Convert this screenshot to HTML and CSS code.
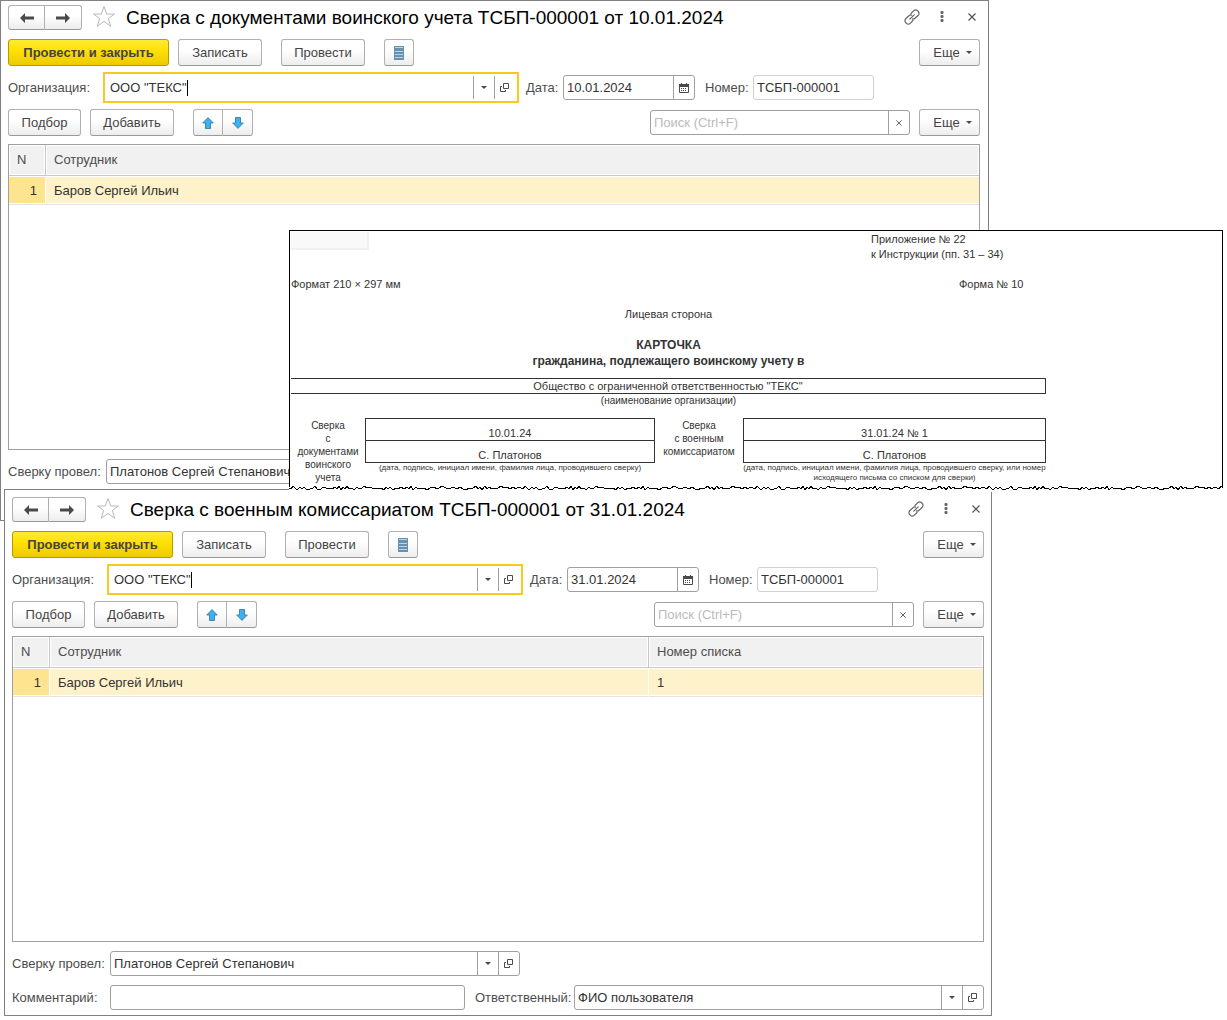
FILE: index.html
```html
<!DOCTYPE html>
<html lang="ru">
<head>
<meta charset="utf-8">
<title>Сверка с документами воинского учета</title>
<link rel="stylesheet" href="styles.css">
</head>
<body>
<svg class="defs" width="0" height="0" aria-hidden="true">
  <symbol id="i-left" viewBox="0 0 14 10"><path d="M0 5 5 0V3.500H14V6.500H5V10Z" fill="#4a4a4a"/></symbol>
  <symbol id="i-right" viewBox="0 0 14 10"><path d="M14 5 9 0V3.500H0V6.500H9V10Z" fill="#4a4a4a"/></symbol>
  <symbol id="i-star" viewBox="0 0 24 23"><path d="M12 1.500 14.700 9H22.500L16.300 13.500 18.800 21.300 12 16.500 5.200 21.300 7.700 13.500 1.500 9H9.300Z" fill="#fff" stroke="#b4bac0" stroke-width="1"/></symbol>
  <symbol id="i-link" viewBox="0 0 16 16"><g fill="none" stroke="#666" stroke-width="1.200" stroke-linecap="round"><path d="M7 4.500 9.800 1.700a2.600 2.600 0 0 1 3.700 0l.8.8a2.600 2.600 0 0 1 0 3.700L11 9.300a2.600 2.600 0 0 1-2.600.6"/><path d="M9 11.500 6.200 14.300a2.600 2.600 0 0 1-3.700 0l-.8-.8a2.600 2.600 0 0 1 0-3.700L5 6.700a2.600 2.600 0 0 1 2.600-.6"/><path d="M5.800 10.200 10.200 5.800"/></g></symbol>
  <symbol id="i-dots" viewBox="0 0 4 12"><g fill="#666"><rect x=".5" y="0" width="3" height="3" rx="1"/><rect x=".5" y="4" width="3" height="3" rx="1"/><rect x=".5" y="8" width="3" height="3" rx="1"/></g></symbol>
  <symbol id="i-close" viewBox="0 0 8 8"><path d="M.5.5l7 7M7.500.5l-7 7" stroke="#555" stroke-width="1.200"/></symbol>
  <symbol id="i-list" viewBox="0 0 10 14"><rect width="10" height="14" fill="#6991ad"/><path d="M1 1.500h8M1 5.500h8M1 8.500h8M1 11.500h8" stroke="#b9d5e8" stroke-width="1"/></symbol>
  <symbol id="i-down" viewBox="0 0 6 3"><path d="M0 0H6L3 3Z" fill="#4a4a4a"/></symbol>
  <symbol id="i-open" viewBox="0 0 10 9"><g fill="none" stroke="#4a4a4a"><path d="M3.500.5h5v5h-5z"/><path d="M2 3.500H.5v5h5V7"/></g></symbol>
  <symbol id="i-cal" viewBox="0 0 10 10"><path d="M.5 1.500h9v8h-9z" fill="#fff" stroke="#4a4a4a"/><path d="M0 1h10v3H0zM2 0h1v1H2zM7 0h1v1H7z" fill="#4a4a4a"/><path d="M2 5.500h6M2 7.500h6" stroke="#4a4a4a" stroke-dasharray="1 1"/></symbol>
  <symbol id="i-up-blue" viewBox="0 0 12 12"><path d="M6 .6 11.300 6H8.500v5.500h-5V6H.7Z" fill="#42b0ee" stroke="#2f80ad" stroke-width=".9"/></symbol>
  <symbol id="i-down-blue" viewBox="0 0 12 12"><path d="M6 11.400 11.300 6H8.500V.5h-5V6H.7Z" fill="#42b0ee" stroke="#2f80ad" stroke-width=".9"/></symbol>
</svg>
<main class="desktop">

  <section class="window window-docs">
    <header class="title-row">
      <div class="group nav">
        <button class="btn" aria-label="Назад"><svg width="14" height="10"><use href="#i-left"/></svg></button>
        <button class="btn" aria-label="Вперед"><svg width="14" height="10"><use href="#i-right"/></svg></button>
      </div>
      <button class="ghost star" aria-label="В избранное"><svg width="24" height="23"><use href="#i-star"/></svg></button>
      <h1>Сверка с документами воинского учета ТСБП-000001 от 10.01.2024</h1>
      <button class="ghost" aria-label="Ссылка"><svg width="16" height="16"><use href="#i-link"/></svg></button>
      <button class="ghost" aria-label="Меню"><svg width="4" height="12"><use href="#i-dots"/></svg></button>
      <button class="ghost" aria-label="Закрыть"><svg width="8" height="8"><use href="#i-close"/></svg></button>
    </header>
    <div class="toolbar">
      <button class="btn primary">Провести и закрыть</button>
      <button class="btn save">Записать</button>
      <button class="btn post">Провести</button>
      <button class="btn icon" aria-label="Список"><svg width="10" height="14"><use href="#i-list"/></svg></button>
      <button class="btn more">Еще <svg width="6" height="3"><use href="#i-down"/></svg></button>
    </div>
    <div class="fields">
      <label class="label-org" for="org1">Организация:</label>
      <div class="field focused">
        <input class="org" id="org1" value="ООО &quot;ТЕКС&quot;"><span class="caret"></span>
        <button class="part" aria-label="Выбрать"><svg width="6" height="3"><use href="#i-down"/></svg></button>
        <button class="part" aria-label="Открыть"><svg width="10" height="9"><use href="#i-open"/></svg></button>
      </div>
      <label class="label-date" for="date1">Дата:</label>
      <div class="field date">
        <input id="date1" value="10.01.2024">
        <button class="part" aria-label="Календарь"><svg width="10" height="10"><use href="#i-cal"/></svg></button>
      </div>
      <label class="label-num" for="num1">Номер:</label>
      <div class="field number"><input id="num1" value="ТСБП-000001"></div>
    </div>
    <div class="commands">
      <button class="btn pick">Подбор</button>
      <button class="btn add">Добавить</button>
      <div class="group move">
        <button class="btn" aria-label="Вверх"><svg width="12" height="12"><use href="#i-up-blue"/></svg></button>
        <button class="btn" aria-label="Вниз"><svg width="12" height="12"><use href="#i-down-blue"/></svg></button>
      </div>
      <div class="field search">
        <input type="text" placeholder="Поиск (Ctrl+F)" aria-label="Поиск">
        <button class="part" aria-label="Очистить"><svg width="6" height="6"><use href="#i-close"/></svg></button>
      </div>
      <button class="btn more">Еще <svg width="6" height="3"><use href="#i-down"/></svg></button>
    </div>
    <div class="list">
      <table>
        <thead><tr><th class="n">N</th><th>Сотрудник</th></tr></thead>
        <tbody><tr><td class="n">1</td><td>Баров Сергей Ильич</td></tr></tbody>
      </table>
    </div>
    <div class="footer-row">
      <label class="label-foot" for="by1">Сверку провел:</label>
      <div class="field person">
        <input id="by1" value="Платонов Сергей Степанович">
        <button class="part" aria-label="Выбрать"><svg width="6" height="3"><use href="#i-down"/></svg></button>
        <button class="part" aria-label="Открыть"><svg width="10" height="9"><use href="#i-open"/></svg></button>
      </div>
    </div>
  </section>

  <section class="window window-office">
    <header class="title-row">
      <div class="group nav">
        <button class="btn" aria-label="Назад"><svg width="14" height="10"><use href="#i-left"/></svg></button>
        <button class="btn" aria-label="Вперед"><svg width="14" height="10"><use href="#i-right"/></svg></button>
      </div>
      <button class="ghost star" aria-label="В избранное"><svg width="24" height="23"><use href="#i-star"/></svg></button>
      <h1>Сверка с военным комиссариатом ТСБП-000001 от 31.01.2024</h1>
      <button class="ghost" aria-label="Ссылка"><svg width="16" height="16"><use href="#i-link"/></svg></button>
      <button class="ghost" aria-label="Меню"><svg width="4" height="12"><use href="#i-dots"/></svg></button>
      <button class="ghost" aria-label="Закрыть"><svg width="8" height="8"><use href="#i-close"/></svg></button>
    </header>
    <div class="toolbar">
      <button class="btn primary">Провести и закрыть</button>
      <button class="btn save">Записать</button>
      <button class="btn post">Провести</button>
      <button class="btn icon" aria-label="Список"><svg width="10" height="14"><use href="#i-list"/></svg></button>
      <button class="btn more">Еще <svg width="6" height="3"><use href="#i-down"/></svg></button>
    </div>
    <div class="fields">
      <label class="label-org" for="org2">Организация:</label>
      <div class="field focused">
        <input class="org" id="org2" value="ООО &quot;ТЕКС&quot;"><span class="caret"></span>
        <button class="part" aria-label="Выбрать"><svg width="6" height="3"><use href="#i-down"/></svg></button>
        <button class="part" aria-label="Открыть"><svg width="10" height="9"><use href="#i-open"/></svg></button>
      </div>
      <label class="label-date" for="date2">Дата:</label>
      <div class="field date">
        <input id="date2" value="31.01.2024">
        <button class="part" aria-label="Календарь"><svg width="10" height="10"><use href="#i-cal"/></svg></button>
      </div>
      <label class="label-num" for="num2">Номер:</label>
      <div class="field number"><input id="num2" value="ТСБП-000001"></div>
    </div>
    <div class="commands">
      <button class="btn pick">Подбор</button>
      <button class="btn add">Добавить</button>
      <div class="group move">
        <button class="btn" aria-label="Вверх"><svg width="12" height="12"><use href="#i-up-blue"/></svg></button>
        <button class="btn" aria-label="Вниз"><svg width="12" height="12"><use href="#i-down-blue"/></svg></button>
      </div>
      <div class="field search">
        <input type="text" placeholder="Поиск (Ctrl+F)" aria-label="Поиск">
        <button class="part" aria-label="Очистить"><svg width="6" height="6"><use href="#i-close"/></svg></button>
      </div>
      <button class="btn more">Еще <svg width="6" height="3"><use href="#i-down"/></svg></button>
    </div>
    <div class="list">
      <table>
        <thead><tr><th class="n">N</th><th>Сотрудник</th><th class="list-no">Номер списка</th></tr></thead>
        <tbody><tr><td class="n">1</td><td>Баров Сергей Ильич</td><td>1</td></tr></tbody>
      </table>
    </div>
    <div class="footer-row">
      <label class="label-foot" for="by2">Сверку провел:</label>
      <div class="field person">
        <input id="by2" value="Платонов Сергей Степанович">
        <button class="part" aria-label="Выбрать"><svg width="6" height="3"><use href="#i-down"/></svg></button>
        <button class="part" aria-label="Открыть"><svg width="10" height="9"><use href="#i-open"/></svg></button>
      </div>
    </div>
    <div class="footer-row">
      <label class="label-foot" for="note2">Комментарий:</label>
      <div class="field note"><input id="note2" value=""></div>
      <label class="label-resp" for="resp2">Ответственный:</label>
      <div class="field resp">
        <input id="resp2" value="ФИО пользователя">
        <button class="part" aria-label="Выбрать"><svg width="6" height="3"><use href="#i-down"/></svg></button>
        <button class="part" aria-label="Открыть"><svg width="10" height="9"><use href="#i-open"/></svg></button>
      </div>
    </div>
  </section>

  <article class="sheet">
    <div class="paper">
      <div class="sheet-top">
        <div class="stub"></div>
        <p class="annex">Приложение № 22<br>к Инструкции (пп. 31 – 34)</p>
      </div>
      <div class="sheet-format"><span>Формат 210 × 297 мм</span><span class="form-no">Форма № 10</span></div>
      <p class="side">Лицевая сторона</p>
      <h2>КАРТОЧКА<br>гражданина, подлежащего воинскому учету в</h2>
      <p class="company">Общество с ограниченной ответственностью "ТЕКС"</p>
      <p class="hint">(наименование организации)</p>
      <div class="checks">
        <p class="check-name">Сверка<br>с<br>документами<br>воинского<br>учета</p>
        <div class="check">
          <p class="cell">10.01.24</p>
          <p class="cell">С. Платонов</p>
          <p class="tiny">(дата, подпись, инициал имени, фамилия лица, проводившего сверку)</p>
        </div>
        <p class="check-name">Сверка<br>с военным<br>комиссариатом</p>
        <div class="check">
          <p class="cell">31.01.24 № 1</p>
          <p class="cell">С. Платонов</p>
          <p class="tiny">(дата, подпись, инициал имени, фамилия лица, проводившего сверку, или номер исходящего письма со списком для сверки)</p>
        </div>
      </div>
    </div>
    <svg class="tear" height="8" aria-hidden="true">
      <defs><pattern id="tear" width="232" height="8" patternUnits="userSpaceOnUse">
        <path d="M0 4 2 5 4 2 6 4 8 6 11 3 13 5 15 3 18 6 21 5 24 4 26 2 28 5 31 6 33 4 36 3 38 5 41 4 43 5 46 3 48 5 50 2 52 6 54 3 56 5 58 2 60 5 63 4 65 6 68 3 70 5 73 4 75 2 78 4 80 3 83 4 92 4 95 6 97 3 99 5 101 3 104 6 107 4 109 5 112 3 115 5 118 3 120 5 122 2 124 6 127 3 129 5 132 4 135 4 138 6 141 4 145 3 148 5 150 4 153 2 157 4 160 5 164 3 168 5 171 3 174 5 177 6 180 4 184 4 187 2 189 5 191 3 193 6 196 2 198 5 200 3 203 5 206 4 209 4 212 2 215 4 218 3 221 5 224 3 227 5 229 3 232 4" fill="none" stroke="#000" stroke-width="1" shape-rendering="crispEdges"/>
      </pattern></defs>
      <rect width="100%" height="8" fill="url(#tear)"/>
    </svg>
  </article>
</main>
</body>
</html>
```
FILE: styles.css
```css
* { box-sizing: border-box; }

body {
  margin: 0;
  background: #fff;
  color: #333;
  font: 13px/16px "Liberation Sans", Arial, sans-serif;
}

.defs { position: absolute; }
svg { display: block; flex: none; }
h1, h2, p { margin: 0; }
button, input { font: inherit; color: inherit; }

.desktop {
  position: relative;
  min-width: 1100px;
  min-height: 1020px;
}

/* Windows */
.window {
  position: absolute;
  padding: 4px 8px 2px 7px;
  background: #fff;
  border: 1px solid #808080;
}
.window-docs { left: 0; top: 0; right: 238px; min-height: 521px; }
.window-office { left: 4px; top: 489px; right: 235px; padding: 7px 7px 5px; }

.title-row { display: flex; align-items: center; height: 25px; }
h1 {
  flex: 1;
  color: #000;
  font-size: 19px;
  font-weight: 400;
  line-height: 24px;
  white-space: nowrap;
}
.ghost {
  display: flex;
  justify-content: center;
  width: 30px;
  padding: 0 0 2px;
  background: none;
  border: 0;
}
.ghost:last-child { width: 16px; margin-left: 7px; }
.star { width: 24px; margin: 0 10px 0 10px; }

/* Buttons */
.btn {
  display: flex;
  align-items: center;
  justify-content: center;
  height: 27px;
  padding: 0;
  background: linear-gradient(#fff 40%, #ededed);
  border: 1px solid #b0b0b0;
  border-bottom-color: #999;
  border-radius: 3px;
  color: #444;
}
.primary {
  width: 161px;
  background: linear-gradient(#ffea36, #ffe000 45%, #ecca00);
  border-color: #b39b00;
  font-weight: 700;
}
.save { width: 84px; }
.post { width: 84px; margin-left: 10px; }
.icon { width: 30px; margin-left: 10px; }
.more { gap: 6px; width: 61px; padding-left: 6px; margin-left: auto; }
.pick { width: 73px; }
.add { width: 84px; }
.group { display: flex; }
.group .btn:first-child { border-radius: 3px 0 0 3px; }
.group .btn:last-child { border-left: 0; border-radius: 0 3px 3px 0; }
.nav .btn { width: 37px; height: 25px; }
.move { margin-left: 10px; }
.move .btn { width: 30px; }

.toolbar { display: flex; gap: 9px; margin-top: 9px; }

/* Fields */
label { flex: none; color: #4d4d4d; white-space: nowrap; }
.field {
  display: flex;
  height: 25px;
  background: #fff;
  border: 1px solid #a0a0a0;
  border-radius: 3px;
  overflow: hidden;
}
.field input {
  flex: 1;
  min-width: 0;
  padding: 0 3px;
  background: none;
  border: 0;
  outline: 0;
}
.field input::placeholder { color: #bbb; opacity: 1; }
.part {
  display: flex;
  align-items: center;
  justify-content: center;
  flex: none;
  width: 21px;
  padding: 0;
  background: none;
  border: 0;
  border-left: 1px solid #a0a0a0;
}

.fields { display: flex; align-items: center; margin-top: 6px; }
.label-org { width: 95px; }
.focused {
  align-items: center;
  flex: 0 1 416px;
  height: 31px;
  padding: 2px;
  border: 2px solid #f9c922;
  border-radius: 0;
}
.focused .org { flex: none; width: 80px; padding: 0 0 0 3px; }
.focused .part { height: 23px; }
.caret { width: 1px; height: 16px; margin-right: auto; background: #000; }
.label-date { width: 37px; margin-left: 7px; }
.date { width: 132px; }
.label-num { width: 48px; margin-left: 10px; }
.number { width: 121px; border-color: #d0d0d0; }

.commands { display: flex; align-items: center; gap: 9px; margin-top: 6px; }
.search { width: 260px; margin-left: auto; }
.search + .more { margin-left: 0; }

/* Employee list */
.list {
  min-height: 306px;
  margin-top: 8px;
  border: 1px solid #a0a0a0;
}
table { width: 100%; border-spacing: 0; table-layout: fixed; }
th {
  height: 31px;
  padding: 0 8px;
  background: #f1f1f1;
  border-right: 1px solid #c8c8c8;
  border-bottom: 1px solid #c8c8c8;
  box-shadow: inset 0 0 0 1px #fff;
  color: #4d4d4d;
  font-weight: 400;
  text-align: left;
}
td {
  height: 29px;
  padding: 2px 8px 0;
  background: #fdf2c9;
  border-right: 1px solid #fff;
  border-bottom: 1px solid #e4e4e4;
  box-shadow: inset 0 1px #fff, inset 0 -1px #fff;
}
th:last-child, td:last-child { border-right: 0; }
.n { width: 37px; }
td.n { background: #ffe48f; text-align: right; }
.list-no { width: 334px; }

.footer-row { display: flex; align-items: center; margin-top: 9px; }
.label-foot { width: 98px; }
.person { flex: 0 1 410px; }
.note { flex: 0 1 355px; }
.label-resp { width: 109px; padding-left: 10px; }
.resp { flex: 1; }

/* Printed card */
.sheet {
  position: absolute;
  left: 289px;
  top: 230px;
  right: 4px;
  font-size: 11px;
  line-height: 15px;
}
.paper {
  height: 257px;
  padding: 1px 0 0 1px;
  background: #fff;
  border: 1px solid #000;
  border-bottom: 0;
  overflow: hidden;
}
.paper > * { max-width: 755px; }
.tear { width: 100%; margin-top: -3px; background: linear-gradient(transparent 3px, #fff 3px); }
.sheet-top { display: flex; justify-content: space-between; height: 45px; }
.stub {
  width: 78px;
  height: 18px;
  background: #f9f9f9;
  border: solid #f0f0f0;
  border-width: 0 2px 2px 0;
}
.annex { width: 175px; white-space: nowrap; }
.sheet-format { display: flex; justify-content: space-between; }
.form-no { width: 87px; }
.side { margin-top: 15px; text-align: center; }
h2 {
  margin-top: 15px;
  font-size: 12px;
  line-height: 16px;
  text-align: center;
}
.company {
  height: 16px;
  margin-top: 9px;
  border: 1px solid #333;
  border-left: 0;
  line-height: 14px;
  text-align: center;
}
.hint { font-size: 10px; line-height: 14px; text-align: center; }
.checks {
  display: grid;
  grid-template-columns: 74px 290px 88px 303px;
  margin-top: 10px;
  text-align: center;
}
.check-name { padding-top: 1px; font-size: 10px; line-height: 13px; }
.cell {
  height: 23px;
  padding-top: 7px;
  border: 1px solid #333;
  line-height: 15px;
}
.cell + .cell { border-top: 0; height: 22px; }
.tiny { font-size: 8px; line-height: 10px; }
```
